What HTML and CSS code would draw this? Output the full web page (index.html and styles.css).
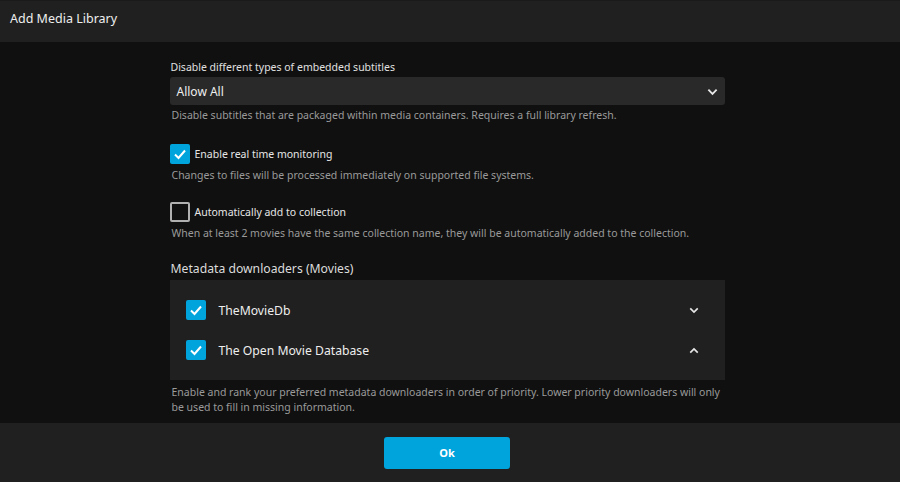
FILE: index.html
```html
<!DOCTYPE html>
<html>
<head>
<meta charset="utf-8">
<link rel="stylesheet" href="styles.css">
</head>
<body>
<div class="dialog">
  <header class="head"><h1 class="title">Add Media Library</h1></header>
  <main class="content">
    <div class="col">
      <div class="field">
        <label class="label">Disable different types of embedded subtitles</label>
        <div class="select"><span>Allow All</span>
          <svg class="chev" viewBox="0 0 12 8" width="11" height="8"><path d="M1.5 1.5 L6 6 L10.5 1.5" fill="none" stroke="#e6e6e6" stroke-width="2"/></svg>
        </div>
        <div class="help">Disable subtitles that are packaged within media containers. Requires a full library refresh.</div>
      </div>
      <div class="field check-field">
        <div class="check-row">
          <span class="cb on"><svg viewBox="0 0 20 20" width="20" height="20"><path d="M5 10.5 L8.5 14 L15 6.5" fill="none" stroke="#fff" stroke-width="2"/></svg></span>
          <span class="check-label">Enable real time monitoring</span>
        </div>
        <div class="help">Changes to files will be processed immediately on supported file systems.</div>
      </div>
      <div class="field check-field">
        <div class="check-row">
          <span class="cb off"></span>
          <span class="check-label">Automatically add to collection</span>
        </div>
        <div class="help">When at least 2 movies have the same collection name, they will be automatically added to the collection.</div>
      </div>
      <div class="section">
        <h2 class="section-title">Metadata downloaders (Movies)</h2>
        <div class="panel">
          <div class="prow">
            <span class="cb on"><svg viewBox="0 0 20 20" width="20" height="20"><path d="M5 10.5 L8.5 14 L15 6.5" fill="none" stroke="#fff" stroke-width="2"/></svg></span>
            <span class="pname">TheMovieDb</span>
            <svg class="pchev" viewBox="0 0 12 8" width="10" height="7"><path d="M1.5 1.5 L6 6 L10.5 1.5" fill="none" stroke="#e6e6e6" stroke-width="2"/></svg>
          </div>
          <div class="prow">
            <span class="cb on"><svg viewBox="0 0 20 20" width="20" height="20"><path d="M5 10.5 L8.5 14 L15 6.5" fill="none" stroke="#fff" stroke-width="2"/></svg></span>
            <span class="pname">The Open Movie Database</span>
            <svg class="pchev" viewBox="0 0 12 8" width="10" height="7"><path d="M1.5 6.5 L6 2 L10.5 6.5" fill="none" stroke="#e6e6e6" stroke-width="2"/></svg>
          </div>
        </div>
        <div class="help">Enable and rank your preferred metadata downloaders in order of priority. Lower priority downloaders will only be used to fill in missing information.</div>
      </div>
    </div>
  </main>
  <footer class="foot"><button class="ok">Ok</button></footer>
</div>
</body>
</html>
```
FILE: styles.css
```css
* { box-sizing: border-box; }
html, body { margin: 0; padding: 0; }
body {
  width: 900px; height: 482px; overflow: hidden;
  background: #101010;
  font-family: "Noto Sans", "Open Sans", sans-serif;
  color: #e6e6e6;
}
.dialog { display: flex; flex-direction: column; height: 482px; }
.head {
  height: 42px; background: #202020; border-top: 1px solid #1a1a1a;
  display: flex; align-items: center; padding-left: 10px; flex: none;
}
.title { margin: 0 0 6px; font-size: 12.5px; font-weight: 400; color: #eee; }
.content {
  flex: 1; min-height: 0; overflow: hidden;
  display: flex; justify-content: center; padding: 18px 6px 0 0;
}
.col { width: 555px; display: flex; flex-direction: column; }
.field { display: flex; flex-direction: column; }
.label { font-size: 10.5px; color: #e0e0e0; line-height: 14px; margin-left: 1px; margin-bottom: 3px; }
.select {
  height: 28px; background: #292929; border-radius: 3px;
  display: flex; align-items: center; justify-content: space-between;
  padding: 0 7px 0 7px; font-size: 12px; color: #eee;
}
.chev { margin-top: 1px; }
.help { font-size: 10.5px; color: #9a9a9a; line-height: 15px; margin: 3px 0 0 2px; }
.check-field { margin-top: 21px; }
.check-field + .check-field { margin-top: 19px; }
.check-row { display: flex; align-items: center; height: 20px; }
.cb { width: 20px; height: 20px; border-radius: 2px; flex: none; display: flex; }
.cb.on { background: #00a4dc; }
.cb.off { border: 2px solid #b0b0b0; }
.check-label { font-size: 10.5px; color: #e6e6e6; margin-left: 5px; }
.check-row + .help { margin-top: 4px; }
.section { margin-top: 19px; }
.section-title { margin: 0 0 2px 1px; font-size: 12.2px; font-weight: 400; color: #dcdcdc; line-height: 18px; }
.panel { background: #202020; padding: 10px 26px 10px 16px; display: flex; flex-direction: column; }
.prow { height: 40px; display: flex; align-items: center; }
.pname { font-size: 12.2px; color: #eee; margin-left: 13px; flex: 1; }
.pchev { flex: none; }
.section .help { margin-top: 5px; }
.foot {
  height: 59px; background: #202020; flex: none;
  display: flex; justify-content: center; align-items: center;
  padding-right: 6px;
}
.ok {
  width: 126px; height: 32px; background: #00a4dc; border: none; border-radius: 3px;
  color: #fff; font-family: "Noto Sans", sans-serif; font-weight: 700; font-size: 11px;
}
```
